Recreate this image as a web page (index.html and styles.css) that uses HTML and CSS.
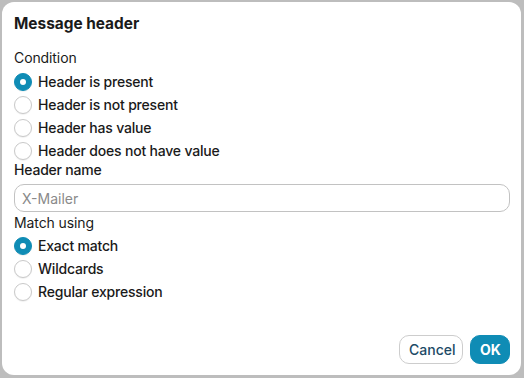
FILE: index.html
```html
<!DOCTYPE html>
<html>
<head>
<meta charset="utf-8">
<link rel="stylesheet" href="styles.css">
</head>
<body>
<div class="dialog">
  <div class="title">Message header</div>
  <div class="group-label first">Condition</div>
  <div class="radios">
    <label class="radio"><span class="dot checked"></span>Header is present</label>
    <label class="radio"><span class="dot"></span>Header is not present</label>
    <label class="radio"><span class="dot"></span>Header has value</label>
    <label class="radio"><span class="dot"></span>Header does not have value</label>
  </div>
  <div class="field-label">Header name</div>
  <div class="input"><span class="placeholder">X-Mailer</span></div>
  <div class="group-label match">Match using</div>
  <div class="radios">
    <label class="radio"><span class="dot checked"></span>Exact match</label>
    <label class="radio"><span class="dot"></span>Wildcards</label>
    <label class="radio"><span class="dot"></span>Regular expression</label>
  </div>
  <div class="footer">
    <button class="btn cancel">Cancel</button>
    <button class="btn ok">OK</button>
  </div>
</div>
</body>
</html>
```
FILE: styles.css
```css
html, body {
  margin: 0;
  padding: 0;
  background: #bdbdbd;
  width: 524px;
  height: 378px;
  overflow: hidden;
}
body {
  font-family: Inter, "Noto Sans", sans-serif;
  color: #1a1a1a;
}
.dialog {
  margin: 2px 0 0 2px;
  width: 519px;
  height: 373px;
  box-sizing: border-box;
  background: #fff;
  border-radius: 12px;
  padding: 12px 11px 12px 12px;
  display: flex;
  flex-direction: column;
}
.title {
  font-size: 15.4px;
  font-weight: 700;
  line-height: 20px;
}
.group-label {
  font-size: 14px;
  line-height: 20px;
  letter-spacing: -0.1px;
}
.group-label.first {
  margin-top: 14px;
}
.group-label.match {
  margin-top: 1px;
}
.radios {
  display: flex;
  flex-direction: column;
  margin-top: 2px;
}
.radios + .field-label {
  margin-top: -1px;
}
.group-label.match + .radios {
  margin-top: 1px;
}
.radio {
  display: flex;
  align-items: center;
  gap: 6px;
  height: 23px;
  font-size: 14px;
  font-weight: 500;
  letter-spacing: -0.2px;
}
.dot {
  width: 18px;
  height: 18px;
  box-sizing: border-box;
  border-radius: 50%;
  border: 1px solid #c9c9c9;
  background: #fff;
  box-shadow: 0 1px 1px rgba(0,0,0,0.06);
  flex: none;
  display: flex;
  align-items: center;
  justify-content: center;
}
.dot.checked {
  background: #0f8cb5;
  border-color: #0f8cb5;
}
.dot.checked::after {
  content: "";
  width: 6px;
  height: 6px;
  border-radius: 50%;
  background: #fff;
}
.field-label {
  font-size: 14px;
  line-height: 18px;
  font-weight: 500;
  letter-spacing: -0.2px;
}
.input {
  margin-top: 5px;
  height: 28px;
  box-sizing: border-box;
  border: 1px solid #c2c2c2;
  border-radius: 10px;
  display: flex;
  align-items: center;
  padding-left: 7px;
  font-size: 14px;
}
.placeholder {
  color: #8a8a8a;
}
.footer {
  margin-top: auto;
  display: flex;
  justify-content: flex-end;
  gap: 7px;
  margin-bottom: -1px;
}
.btn {
  height: 29px;
  box-sizing: border-box;
  border-radius: 10px;
  font-family: Inter, "Noto Sans", sans-serif;
  font-size: 14px;
  padding: 0 9px;
}
.cancel {
  width: 64px;
  background: #fff;
  border: 1px solid #cdcdcd;
  color: #1d4a66;
  font-weight: 500;
}
.ok {
  width: 40px;
  background: #0f8cb5;
  border: 1px solid #0f8cb5;
  color: #fff;
  font-weight: 700;
}
```
